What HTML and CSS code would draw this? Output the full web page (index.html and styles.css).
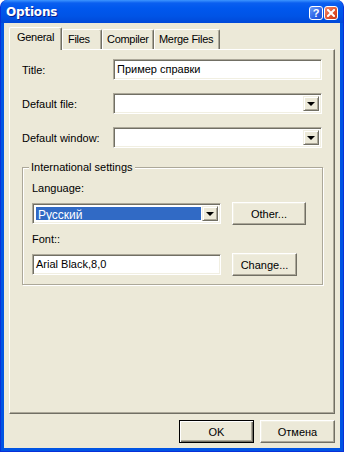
FILE: index.html
```html
<!DOCTYPE html>
<html lang="en">
<head>
    <meta charset="UTF-8">
    <title>Options</title>
    <link rel="stylesheet" href="styles.css">
</head>
<body>
    <div class="window">
        <!-- Title bar -->
        <div class="titlebar">
            <span class="title">Options</span>
            <div class="caption-buttons">
                <span class="cap-btn help">?</span>
                <span class="cap-btn close">
                    <svg width="8" height="8" viewBox="0 0 8 8"><path d="M1 1 L7 7 M7 1 L1 7" stroke="#fff" stroke-width="2" stroke-linecap="square"/></svg>
                </span>
            </div>
        </div>

        <div class="client">
            <!-- Tabs -->
            <div class="tabs">
                <div class="tab active">General</div>
                <div class="tab tab-files">Files</div>
                <div class="tab tab-compiler">Compiler</div>
                <div class="tab tab-merge">Merge Files</div>
            </div>

            <div class="panel">
                <div class="row">
                    <label class="row-label">Title:</label>
                    <div class="field">Пример справки</div>
                </div>
                <div class="row">
                    <label class="row-label">Default file:</label>
                    <div class="field combo">
                        <div class="combo-value"></div>
                        <div class="drop-btn"><span class="arrow"></span></div>
                    </div>
                </div>
                <div class="row">
                    <label class="row-label">Default window:</label>
                    <div class="field combo">
                        <div class="combo-value"></div>
                        <div class="drop-btn"><span class="arrow"></span></div>
                    </div>
                </div>

                <fieldset class="group">
                    <legend>International settings</legend>
                    <div class="group-label">Language:</div>
                    <div class="group-row">
                        <div class="field combo small">
                            <div class="combo-value selected">Русский</div>
                            <div class="drop-btn"><span class="arrow"></span></div>
                        </div>
                        <button class="btn btn-other">Other...</button>
                    </div>
                    <div class="group-label font-label">Font::</div>
                    <div class="group-row">
                        <div class="field small">Arial Black,8,0</div>
                        <button class="btn btn-change">Change...</button>
                    </div>
                </fieldset>
            </div>

            <!-- Dialog buttons -->
            <div class="footer">
                <button class="btn btn-default">OK</button>
                <button class="btn">Отмена</button>
            </div>
        </div>
    </div>
</body>
</html>
```

FILE: styles.css
```css
* {
    margin: 0;
    padding: 0;
    box-sizing: border-box;
}

body {
    width: 344px;
    height: 452px;
    font-family: 'Liberation Sans', Arial, sans-serif;
    font-size: 11px;
    color: #000;
    background: #fff;
}

.window {
    width: 344px;
    height: 452px;
    display: flex;
    flex-direction: column;
    background: #0054e3;
    border-radius: 7px 7px 0 0;
    border: 1px solid #0831d9;
    border-top: none;
}

.titlebar {
    height: 23px;
    flex-shrink: 0;
    display: flex;
    align-items: center;
    justify-content: space-between;
    padding: 0 5px 0 5px;
    border-radius: 7px 7px 0 0;
    background: linear-gradient(#3d95ff 0, #0a5ff0 3px, #0058ee 8px, #0054e6 16px, #0048d8 23px);
}

.title {
    color: #fff;
    font-family: 'DejaVu Sans', sans-serif;
    font-weight: bold;
    font-size: 12px;
    text-shadow: 1px 1px 0 #0a1e8c;
    letter-spacing: -0.2px;
}

.caption-buttons {
    display: flex;
    gap: 1px;
    margin-top: 3px;
}

.cap-btn {
    width: 14px;
    height: 14px;
    border: 1px solid #fff;
    border-radius: 3px;
    display: flex;
    align-items: center;
    justify-content: center;
    color: #fff;
    font-weight: bold;
    font-size: 11px;
    line-height: 1;
}

.help {
    background: linear-gradient(135deg, #6b9cf7, #2a62e8 60%, #1a4fd0);
}

.close {
    background: linear-gradient(135deg, #f08a6c, #e0502a 60%, #c83a18);
}

.client {
    flex: 1;
    margin: 0 3px 3px 3px;
    background: #ece9d8;
    padding: 4px 5px 5px 5px;
    display: flex;
    flex-direction: column;
}

/* Tabs */
.tabs {
    display: flex;
    align-items: flex-end;
    height: 22px;
    flex-shrink: 0;
}

.tab {
    height: 20px;
    padding: 3px 0 0 5px;
    border: 1px solid #fff;
    border-right-color: #716f64;
    border-bottom: none;
    border-radius: 2px 2px 0 0;
    box-shadow: inset -1px 0 0 #aca899;
    white-space: nowrap;
    letter-spacing: -0.3px;
}

.tab.active {
    width: 53px;
    height: 23px;
    margin-bottom: -1px;
    padding: 3px 0 0 7px;
    background: #ece9d8;
    position: relative;
    z-index: 1;
}

.tab-files {
    width: 40px;
}

.tab-compiler {
    width: 52px;
    padding-left: 4px;
}

.tab-merge {
    width: 66px;
    padding-left: 4px;
}

.panel {
    flex: 1;
    border: 1px solid #fff;
    border-right-color: #716f64;
    border-bottom-color: #716f64;
    box-shadow: inset -1px -1px 0 #aca899;
    padding: 9px 12px 0 12px;
    display: flex;
    flex-direction: column;
    gap: 13px;
}

.row {
    display: flex;
    align-items: center;
    height: 21px;
}

.row-label {
    width: 91px;
}

/* Sunken edit field */
.field {
    width: 209px;
    height: 21px;
    background: #fff;
    border: 1px solid;
    border-color: #aca899 #fff #fff #aca899;
    box-shadow: inset 1px 1px 0 #716f64, inset -1px -1px 0 #f1efe2;
    padding: 3px 0 0 3px;
    white-space: nowrap;
}

.combo {
    display: flex;
    padding: 2px;
}

.combo-value {
    flex: 1;
    margin-right: 1px;
}

.combo-value.selected {
    background: #316ac5;
    color: #fff;
    padding: 1px 0 0 2px;
    margin: 1px 1px 1px 1px;
    font-size: 12px;
}

.drop-btn {
    width: 16px;
    background: #ece9d8;
    border: 1px solid;
    border-color: #f1efe2 #716f64 #716f64 #f1efe2;
    box-shadow: inset 1px 1px 0 #fff, inset -1px -1px 0 #aca899;
    display: flex;
    align-items: center;
    justify-content: center;
}

.arrow {
    width: 0;
    height: 0;
    border-left: 4px solid transparent;
    border-right: 4px solid transparent;
    border-top: 4px solid #000;
    margin-top: 1px;
}

/* Group box */
.group {
    margin: 0 -1px 0 0;
    height: 124px;
    border: 1px solid #aca899;
    box-shadow: 1px 1px 0 #fff, inset 1px 1px 0 #fff;
    padding: 0 0 0 9px;
}

.group legend {
    margin-left: -3px;
    padding: 0 2px;
    line-height: 13px;
    background: #ece9d8;
}

.group-label {
    margin-top: 8px;
    line-height: 13px;
}

.group-row {
    display: flex;
    align-items: center;
    gap: 11px;
    margin-top: 7px;
}

.font-label {
    margin-top: 8px;
}

.field.small {
    width: 189px;
}

/* Buttons */
.btn {
    height: 23px;
    font-family: 'Liberation Sans', Arial, sans-serif;
    font-size: 11px;
    color: #000;
    background: #ece9d8;
    border: 1px solid;
    border-color: #fff #716f64 #716f64 #fff;
    box-shadow: inset -1px -1px 0 #aca899, inset 1px 1px 0 #f1efe2;
}

.btn-other {
    width: 74px;
}

.btn-change {
    width: 65px;
}

.footer {
    display: flex;
    justify-content: flex-end;
    gap: 6px;
    margin-top: 6px;
    flex-shrink: 0;
}

.footer .btn {
    width: 75px;
}

.btn-default {
    border-color: #000;
    box-shadow: inset 1px 1px 0 #fff, inset -1px -1px 0 #716f64, inset -2px -2px 0 #aca899;
}
```
